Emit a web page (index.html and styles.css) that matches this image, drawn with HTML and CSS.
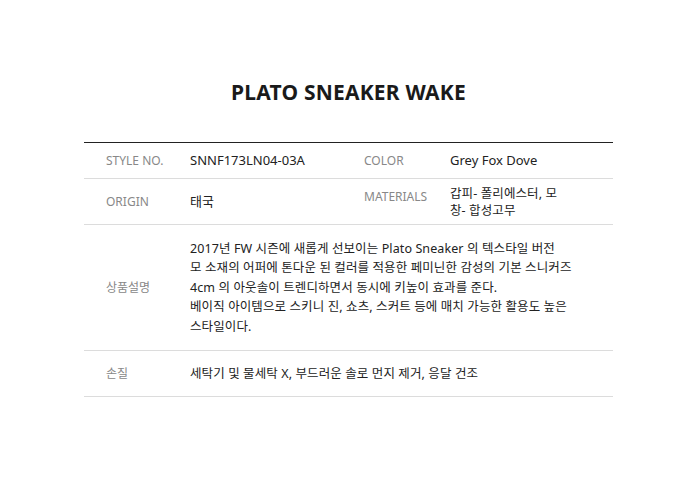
FILE: index.html
```html
<!DOCTYPE html>
<html lang="ko">
<head>
<meta charset="utf-8">
<title>PLATO SNEAKER WAKE</title>
<link rel="stylesheet" href="styles.css">
</head>
<body>
<div class="page">
  <h1 class="title">PLATO SNEAKER WAKE</h1>
  <div class="spec">
    <div class="row row-short">
      <div class="label">STYLE NO.</div>
      <div class="value">SNNF173LN04-03A</div>
      <div class="label label2">COLOR</div>
      <div class="value">Grey Fox Dove</div>
    </div>
    <div class="row row-mid">
      <div class="label">ORIGIN</div>
      <div class="value">태국</div>
      <div class="label label2 label-top">MATERIALS</div>
      <div class="value value-ko">갑피- 폴리에스터, 모<br>창- 합성고무</div>
    </div>
    <div class="row row-desc">
      <div class="label">상품설명</div>
      <div class="value value-wide">2017년 FW 시즌에 새롭게 선보이는 Plato Sneaker 의 텍스타일 버전<br>모 소재의 어퍼에 톤다운 된 컬러를 적용한 페미닌한 감성의 기본 스니커즈<br>4cm 의 아웃솔이 트렌디하면서 동시에 키높이 효과를 준다.<br>베이직 아이템으로 스키니 진, 쇼츠, 스커트 등에 매치 가능한 활용도 높은<br>스타일이다.</div>
    </div>
    <div class="row row-mid">
      <div class="label">손질</div>
      <div class="value value-wide">세탁기 및 물세탁 X, 부드러운 솔로 먼지 제거, 응달 건조</div>
    </div>
  </div>
</div>
</body>
</html>
```
FILE: styles.css
```css
html, body {
  margin: 0;
  padding: 0;
  background: #fff;
}
body {
  font-family: "Noto Sans", "Noto Sans CJK KR", sans-serif;
  color: #222;
}
.page {
  padding: 78px 87px 0 84px;
}
.title {
  margin: 0;
  text-align: center;
  font-size: 21px;
  line-height: 28px;
  font-weight: 700;
  color: #1a1a1a;
  letter-spacing: 0.2px;
}
.spec {
  margin-top: 36px;
  border-top: 1px solid #222;
}
.row {
  display: grid;
  grid-template-columns: 106px 174px 86px 1fr;
  align-items: center;
  border-bottom: 1px solid #dcdcdc;
  font-size: 12px;
}
.row-short { height: 35px; }
.row-mid { min-height: 45px; }
.row-desc { padding: 14px 0; }
.label {
  padding-left: 22px;
  color: #888;
  font-size: 12px;
  line-height: 17px;
}
.label2 { padding-left: 0; }
.label-top {
  align-self: start;
  padding-top: 9px;
}
.value {
  color: #222;
  font-size: 13px;
  line-height: 17px;
}
.value-ko {
  font-size: 12.5px;
  letter-spacing: 0.1px;
}
.value-wide {
  grid-column: 2 / 5;
  font-size: 12.5px;
  line-height: 19.4px;
  letter-spacing: 0.1px;
}
```
